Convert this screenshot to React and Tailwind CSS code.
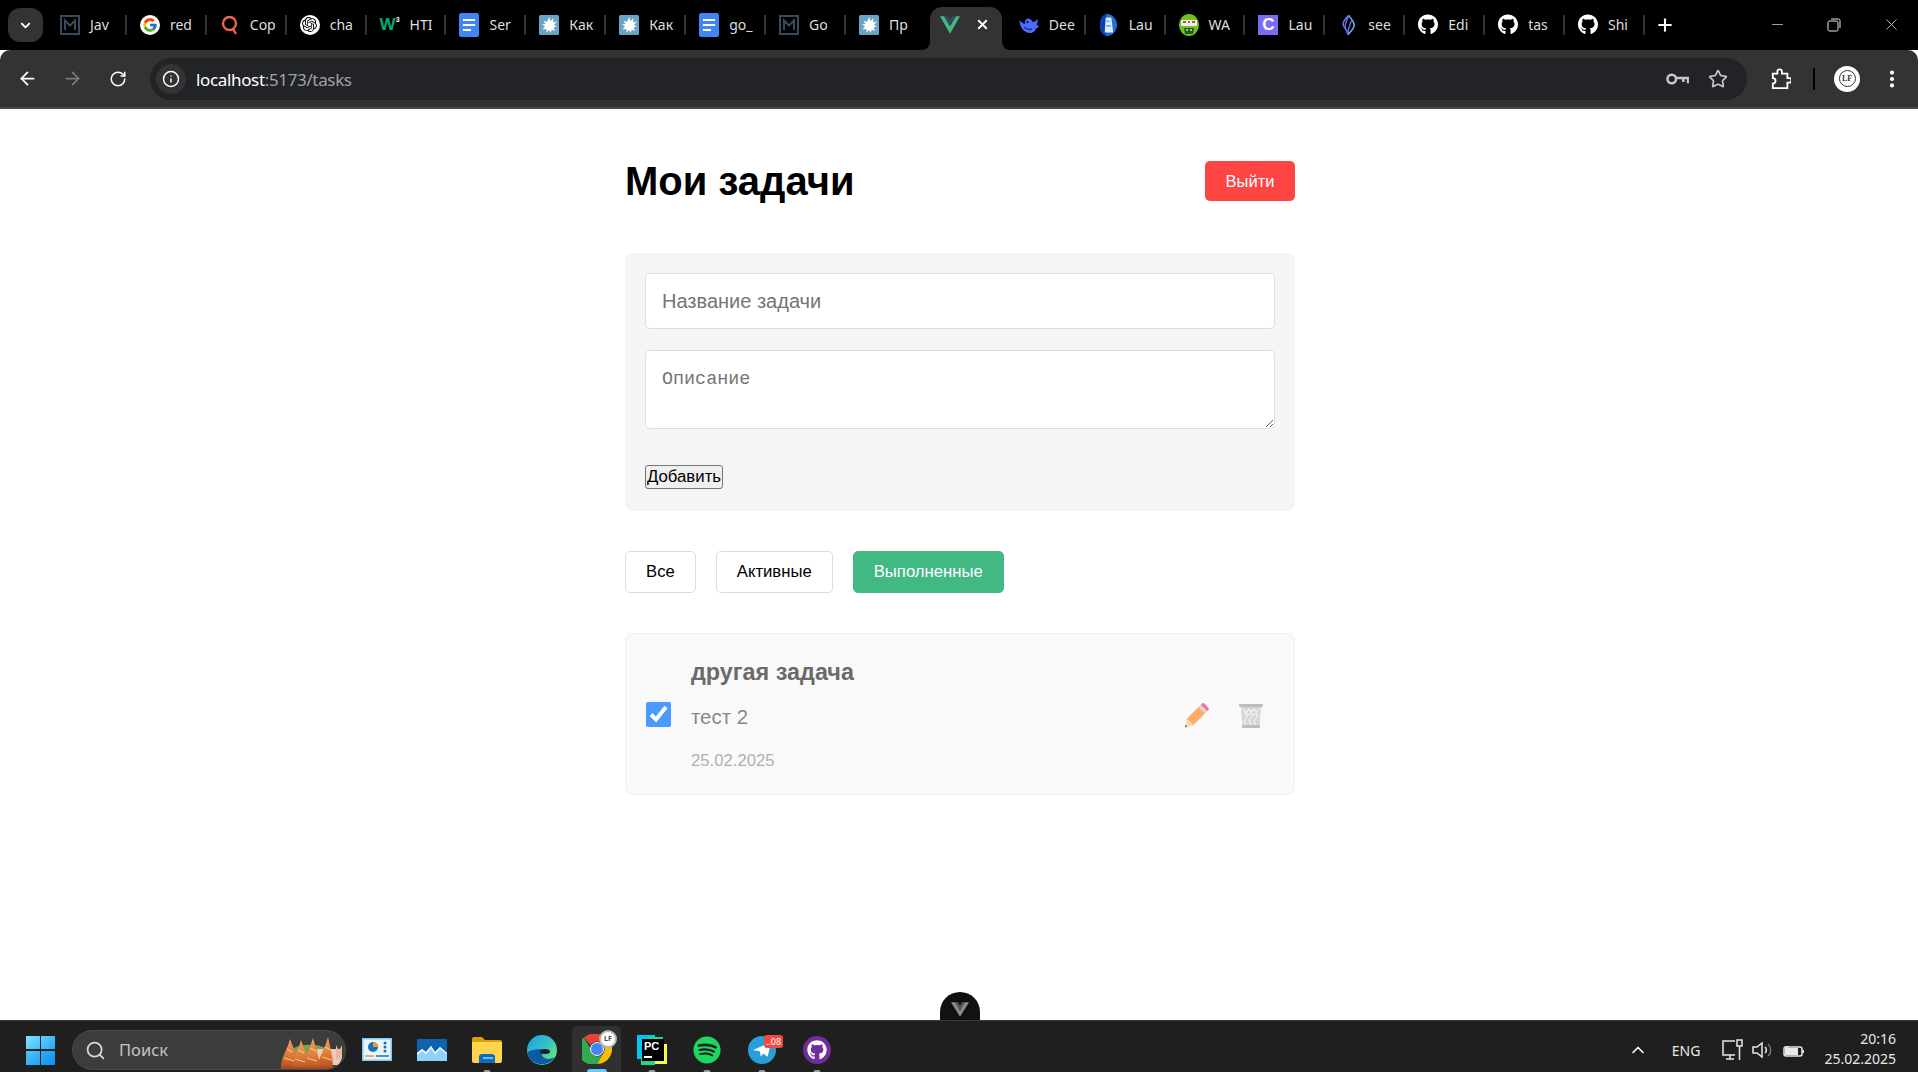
import React from "react";
import { FcGoogle } from "react-icons/fc";
import { FaGithub, FaSpotify } from "react-icons/fa";
import { SiOpenai } from "react-icons/si";
import { ArrowLeft, ArrowRight, RotateCw, Info, Star, ChevronDown, Plus, X, Minus, EllipsisVertical, Search, ChevronUp } from "lucide-react";

// --- tab favicons ---
const MailIcon = () => (
  <svg viewBox="0 0 20 20" className="w-5 h-5" fill="none" stroke="#3a4a5e" strokeWidth="2">
    <rect x="1" y="1" width="18" height="18" />
    <path d="M5 15V5.5l5 5 5-5V15" />
  </svg>
);

const GoogleIcon = () => (
  <div className="w-5 h-5 rounded-full bg-white flex items-center justify-center">
    <FcGoogle className="w-4 h-4" />
  </div>
);

const CopyleaksIcon = () => (
  <svg viewBox="0 0 20 20" className="w-5 h-5" fill="none" stroke="#ee6352" strokeWidth="2.4">
    <circle cx="9.5" cy="8.5" r="6.5" />
    <path d="M13 14l3 5" />
  </svg>
);

const ChatIcon = () => (
  <div className="w-5 h-5 rounded-full bg-white flex items-center justify-center">
    <SiOpenai className="w-[15px] h-[15px] text-black" />
  </div>
);

const W3Icon = () => (
  <div className="w-5 h-5 flex items-start justify-center text-[#04aa6d] font-black text-[17px] leading-[20px] font-['Liberation_Sans',sans-serif]">
    W<span className="text-white text-[7px] leading-[10px]">3</span>
  </div>
);

const DocsIcon = () => (
  <svg viewBox="0 0 20 24" className="w-5 h-6">
    <rect width="20" height="24" rx="2.5" fill="#4285f4" />
    <path d="M4 7h12M4 12h12M4 17h8" stroke="#fff" strokeWidth="2" />
  </svg>
);

const SplashIcon = () => (
  <svg viewBox="0 0 20 20" className="w-5 h-5">
    <rect width="20" height="20" rx="1.5" fill="#6aa3c4" />
    <path d="M10 2l1.5 4 3-3-.5 4.500 4-1-3 3.500 3 1.500-3.500 1 1.500 3.500-3.500-1.500-.5 3.500-2-3-2.500 2.500v-3.500l-4 .5 2.500-3-3-2 3.500-.5-2-3.500 3.500 1.500z" fill="#fff" />
  </svg>
);

const VueIcon = () => (
  <svg viewBox="0 0 24 21" className="w-5 h-[18px]">
    <path d="M0 0h5l7 12 7-12h5L12 21z" fill="#42b883" />
    <path d="M5 0h4.500L12 4.500 14.500 0H19l-7 12z" fill="#35495e" />
  </svg>
);

const WhaleIcon = () => (
  <svg viewBox="0 0 20 18" className="w-5 h-[18px]">
    <path d="M0.500 4C0.500 11 5 17 11 17c3.500 0 5.500-2.500 6.300-5 1.200.2 2.200-.5 2.700-2-1.200 0-2-1-2.200-2.300 1-1.200 1.400-3 .5-4.700-1 2-2.500 2.800-4.300 3.300C12 2.500 9 1.500 7 3.500c-1.500 1.500-1.500 3-1 4.500C4 7.500 2 6 0.500 4z" fill="#4d6bfe" />
    <circle cx="8.500" cy="6" r="1" fill="#000" />
    <path d="M5 11c2 2 5 3 8 2" fill="none" stroke="#000" strokeWidth="0.800" />
  </svg>
);

const LighthouseIcon = () => (
  <svg viewBox="0 0 18 24" className="w-[17px] h-6">
    <path d="M6 0a12 12 0 0 1 0 24z" fill="#1f6fd6" />
    <path d="M6 0a12 12 0 0 0-6 12 12 12 0 0 0 6 12z" fill="#0f3fa8" />
    <path d="M6 4h6l2 16H5z" fill="#dcecff" />
    <path d="M7 8h3M6.500 13h5" stroke="#1f6fd6" strokeWidth="1" />
  </svg>
);

const WaIcon = () => (
  <svg viewBox="0 0 20 22" className="w-5 h-[22px]">
    <ellipse cx="10" cy="11" rx="10" ry="11" fill="#6fc11f" />
    <rect x="2" y="6" width="16" height="6" rx="1" fill="#ececec" />
    <path d="M4 8h3M9 8h2M13 8h3" stroke="#a11f1f" strokeWidth="1.500" />
    <path d="M5 14h10l-1 6H6z" fill="#1d5c1a" />
    <circle cx="8" cy="16" r="1" fill="#cfe8c0" />
    <circle cx="12" cy="16" r="1" fill="#cfe8c0" />
  </svg>
);

const PurpleC = () => (
  <div className="w-5 h-5 bg-[#7c6cf5] text-white text-[17px] leading-5 font-bold text-center font-['Liberation_Sans',sans-serif]">C</div>
);

const SeedIcon = () => (
  <svg viewBox="0 0 16 24" className="w-[14px] h-6" fill="none" strokeWidth="1.600">
    <path d="M9 1C3 6 0 11 5 16c1 1.500 2 4 3 7" stroke="#4f86ff" />
    <path d="M9 1c1 3 6 6 6 11 0 5-5 8-7 11" stroke="#63c8ff" />
    <path d="M9 1C7 6 4 10 5 16M12 7c-1 4-4 6-4 16" stroke="#7c6cf5" />
  </svg>
);

const Github = () => <FaGithub className="w-[21px] h-[21px] text-white" />;

const tabs = [
  { label: "Jav", icon: MailIcon },
  { label: "red", icon: GoogleIcon },
  { label: "Cop", icon: CopyleaksIcon },
  { label: "cha", icon: ChatIcon },
  { label: "HTI", icon: W3Icon },
  { label: "Ser", icon: DocsIcon },
  { label: "Как", icon: SplashIcon },
  { label: "Как", icon: SplashIcon },
  { label: "go_", icon: DocsIcon },
  { label: "Go", icon: MailIcon },
  { label: "Пр", icon: SplashIcon },
  { active: true, icon: VueIcon },
  { label: "Dee", icon: WhaleIcon },
  { label: "Lau", icon: LighthouseIcon },
  { label: "WA", icon: WaIcon },
  { label: "Lau", icon: PurpleC },
  { label: "see", icon: SeedIcon },
  { label: "Edi", icon: Github },
  { label: "tas", icon: Github },
  { label: "Shi", icon: Github },
];

const Tab = ({ tab, noSep }) => {
  const Icon = tab.icon;
  if (tab.active) {
    return (
      <div className="relative w-[80px] h-[43px] shrink-0 flex items-center pb-2">
        <div className="absolute inset-y-0 left-[4px] right-[4px] bg-[#333333] rounded-t-xl" />
        <div className="absolute bottom-0 left-[-4px] w-2 h-2 bg-[#333333]">
          <div className="w-2 h-2 bg-black rounded-br-lg" />
        </div>
        <div className="absolute bottom-0 right-[-4px] w-2 h-2 bg-[#333333]">
          <div className="w-2 h-2 bg-black rounded-bl-lg" />
        </div>
        <div className="relative pl-[14px] flex items-center">
          <Icon />
          <X className="w-[15px] h-[15px] text-white ml-[15px]" strokeWidth={3} />
        </div>
      </div>
    );
  }
  return (
    <div className="relative w-[79.9px] h-[43px] shrink-0 flex items-center pl-[13px] pb-2">
      <div className="w-5 flex justify-center shrink-0">
        <Icon />
      </div>
      <span className="ml-[10px] whitespace-nowrap text-[14px] text-[#dedede] font-['Noto_Sans',sans-serif]">
        {tab.label}
      </span>
      {!noSep && <div className="absolute right-0 top-[8px] h-[20px] w-[2px] bg-[#333333]" />}
    </div>
  );
};

const TabStrip = () => (
  <div className="h-[50px] bg-black flex items-end shrink-0 relative">
    <div className="absolute left-2 top-2 w-[35px] h-[34px] rounded-xl bg-[#333333] flex items-center justify-center">
      <ChevronDown className="w-[15px] h-[15px] text-white" strokeWidth={3} />
    </div>
    <div className="flex ml-[47px]">
      {tabs.map((tab, i) => (
        <Tab key={i} tab={tab} noSep={tab.active || i === 10} />
      ))}
    </div>
    <Plus className="w-5 h-5 text-white ml-[10px] mb-[15px]" strokeWidth={2.5} />
    <div className="flex-1" />
    <div className="flex items-center mb-[16px] text-[#e8e8e8]">
      <Minus className="w-[17px] h-[17px] mr-[41px]" strokeWidth={1} />
      <svg viewBox="0 0 14 14" className="w-[14px] h-[14px] mr-[41px]" fill="none" stroke="#e8e8e8" strokeWidth="1">
        <rect x="1" y="3" width="10" height="10" rx="1.500" />
        <path d="M4 1h7.500A1.500 1.500 0 0 1 13 2.500V10" />
      </svg>
      <X className="w-[19px] h-[19px] mr-[17px]" strokeWidth={1} />
    </div>
  </div>
);

const Toolbar = () => (
  <div className="h-[59px] bg-[#333333] border-b-2 border-[#4a4a4a] rounded-t-[10px] shrink-0 flex items-center text-white">
    <ArrowLeft className="w-[21px] h-[21px] ml-[17px]" strokeWidth={2} />
    <ArrowRight className="w-[21px] h-[21px] ml-[24px] text-[#7a7a7a]" strokeWidth={2} />
    <RotateCw className="w-[18px] h-[18px] ml-[26px]" strokeWidth={2} />
    <div className="ml-[23px] w-[1597px] h-[42px] rounded-full bg-[#222326] flex items-center">
      <div className="ml-[6px] w-[30px] h-[30px] rounded-full bg-[#333333] flex items-center justify-center">
        <Info className="w-[18px] h-[18px]" strokeWidth={2} />
      </div>
      <span className="ml-[10px] mt-[2px] text-[17px] tracking-[-0.35px] text-white font-['Noto_Sans',sans-serif]">
        localhost<span className="text-[#a0a2a6]">:5173/tasks</span>
      </span>
      <div className="flex-1" />
      <svg viewBox="0 0 24 14" className="w-[23px] h-[14px]" fill="none" stroke="#c7c7c7" strokeWidth="2.6">
        <circle cx="6" cy="7" r="4.500" />
        <path d="M11 6h12v5.500M18 6v4" />
      </svg>
      <Star className="w-[20px] h-[20px] ml-[19px] mr-[19px] text-[#c7c7c7]" strokeWidth={2} />
    </div>
    <svg viewBox="0 0 22 24" className="w-5 h-[22px] ml-[24px]" fill="none" stroke="#fff" strokeWidth="2">
      <path d="M2 6h5V4a2.500 2.500 0 0 1 5 0v2h6v5h2a2.500 2.500 0 0 1 0 5h-2v6H2v-5a3 3 0 0 0 0-6z" />
    </svg>
    <div className="w-[2px] h-[22px] bg-black ml-[22px]" />
    <div className="ml-[19px] w-[26px] h-[26px] rounded-full bg-white flex items-center justify-center">
      <div className="w-[17px] h-[17px] rounded-full border border-[#333333] bg-white text-[#333333] text-[8px] font-bold leading-[15px] text-center font-['Liberation_Serif',serif]">
        LF
      </div>
    </div>
    <EllipsisVertical className="w-[22px] h-[22px] ml-[21px]" strokeWidth={2.6} />
  </div>
);

// --- page ---
const PencilEmoji = () => (
  <svg viewBox="0 0 25 26" className="w-[25px] h-[26px]">
    <path d="M2.800 16.800L14.800 4.800l6.400 6.400-12 12z" fill="#ffac6b" />
    <path d="M14.800 4.800l2-2 6.400 6.400-2 2z" fill="#d9d9d9" />
    <path d="M16.800 2.800l1-1a2 2 0 0 1 2.800 0l3.600 3.600a2 2 0 0 1 0 2.800l-1 1z" fill="#f4729a" />
    <path d="M2.800 16.800l6.400 6.400L1 25.500z" fill="#f5d9a8" />
    <path d="M1.600 22.800l1.700 1.700-2.300 1z" fill="#666" />
  </svg>
);

const TrashEmoji = () => (
  <svg viewBox="0 0 24 25" className="w-6 h-[25px]">
    <rect x="0" y="1" width="24" height="3" rx="1" fill="#bdbdbd" />
    <path d="M2 4h20l-1.500 19.500a1.500 1.500 0 0 1-1.500 1.500H5a1.500 1.500 0 0 1-1.500-1.500z" fill="#d6d6d6" />
    <path d="M4 6l5 6-4 6 3 5M10 6l-5 6M10 6l4 6-4 6 3 5M15 6l-5 6M15 6l4 6-4 6 2 5M20 6l-5 6" fill="none" stroke="#f2f2f2" strokeWidth="1.200" />
    <rect x="3" y="22" width="18" height="3" rx="1" fill="#bdbdbd" />
  </svg>
);

const filterClass = "h-[42px] px-5 rounded-[5px] text-[16.7px] border";

const Page = () => (
  <main className="flex-1 flex justify-center bg-white text-black font-['Liberation_Sans',sans-serif] overflow-hidden">
    <div className="w-[670px] ml-[2px] pt-[52px]">
      <div className="flex items-center justify-between mb-[52px] h-10">
        <h1 className="text-[40px] font-bold leading-10">Мои задачи</h1>
        <button className="w-[90px] h-10 rounded-[5px] bg-[#ff4444] text-white text-[16.5px]">Выйти</button>
      </div>

      <div className="bg-[#f5f5f5] rounded-lg p-5 pb-[22px] mb-10">
        <input
          type="text"
          placeholder="Название задачи"
          className="block w-full h-[56px] px-4 mb-[21px] bg-white border border-[#dddddd] rounded-[5px] text-[20px] placeholder:text-[#757575]"
        />
        <textarea
          placeholder="Описание"
          className="block w-full h-[79px] px-4 pt-[18px] pb-3 mb-[36px] bg-white border border-[#dddddd] rounded-[5px] text-[18.4px] leading-[22px] font-['Liberation_Mono',monospace] placeholder:text-[#757575]"
        />
        <button className="block w-[78px] h-6 bg-[#efefef] border border-[#767676] rounded-[3px] text-[16.8px] leading-none">Добавить</button>
      </div>

      <div className="flex gap-5 mb-10">
        <button className={`${filterClass} bg-white border-[#dddddd]`}>Все</button>
        <button className={`${filterClass} bg-white border-[#dddddd]`}>Активные</button>
        <button className={`${filterClass} bg-[#42b883] border-[#42b883] text-white`}>Выполненные</button>
      </div>

      <div className="flex items-center bg-[#f9f9f9] border border-[#eeeeee] rounded-lg pl-[20px] pr-[31px] pt-[25px] pb-[24px]">
        <input type="checkbox" defaultChecked className="w-[25px] h-[25px] accent-[#0075ff] opacity-70 shrink-0" />
        <div className="ml-[20px] flex-1">
          <div className="text-[23.4px] leading-[26px] font-bold text-[#6a6a6a] mb-[20px]">другая задача</div>
          <div className="text-[20.4px] leading-[24px] text-[#888888] mb-[23px]">тест 2</div>
          <div className="text-[16.7px] leading-[18px] text-[#b0b0b0]">25.02.2025</div>
        </div>
        <PencilEmoji />
        <div className="ml-[30px] mt-[1px]"><TrashEmoji /></div>
      </div>
    </div>
  </main>
);

// --- taskbar ---
const WinLogo = () => (
  <div className="grid grid-cols-2 gap-[1.5px] w-[29px] h-[29px]">
    <div className="bg-gradient-to-br from-[#7fe4ff] to-[#38bdf8]" />
    <div className="bg-gradient-to-br from-[#5dd0fb] to-[#22a7f5]" />
    <div className="bg-gradient-to-br from-[#4fc6fa] to-[#1ea0f3]" />
    <div className="bg-gradient-to-br from-[#2bb0f7] to-[#0f8df0]" />
  </div>
);

const BambooArt = () => (
  <svg viewBox="0 0 64 40" className="absolute right-0 top-0 w-16 h-10">
    <defs>
      <linearGradient id="shoot" x1="0" y1="0" x2="0" y2="1">
        <stop offset="0" stopColor="#f2a25f" />
        <stop offset="0.6" stopColor="#dd7a35" />
        <stop offset="1" stopColor="#b5501f" />
      </linearGradient>
    </defs>
    <path d="M8 20c8-8 30-8 38-2v6H8z" fill="#7f9f4f" />
    <path d="M36 18h24c2 6 1 12-3 16H36z" fill="#eccbb8" />
    <path d="M55 14l3 6 3-6v14h-6z" fill="#e8b8a0" />
    <path d="M0 36C0 26 6 20 9 8c3 8 7 16 9 28z" fill="url(#shoot)" />
    <path d="M36 36c2-10 8-18 11-30 2 10 5 20 5 30z" fill="url(#shoot)" />
    <path d="M10 38c2-12 7-18 10-29 3 9 8 17 10 29z" fill="url(#shoot)" />
    <path d="M22 38c2-12 6-18 10-31 3 11 6 19 8 31z" fill="url(#shoot)" />
    <path d="M6 18l5 3M3 27l10 3M17 19l6 3M14 28l10 3M29 17l6 3M26 27l10 3M44 16l6 3M41 26l10 3" stroke="#f7c08f" strokeWidth="1.200" />
    <path d="M0 36h52v4H0z" fill="#a84a1e" />
  </svg>
);

const ChartApp = () => (
  <svg viewBox="0 0 30 24" className="w-[30px] h-6">
    <rect width="30" height="23" fill="#7fcbf2" />
    <rect x="1.500" y="1.500" width="27" height="20" fill="#e9f5fc" />
    <circle cx="11" cy="9" r="5" fill="#1570c0" />
    <path d="M11 9V4a5 5 0 0 1 5 5z" fill="#f39c12" />
    <path d="M3 18h9" stroke="#f39c12" strokeWidth="1.500" />
    <path d="M14 18h13" stroke="#1570c0" strokeWidth="1.500" />
    <circle cx="23" cy="5" r="1.500" fill="#1570c0" />
    <circle cx="23" cy="9" r="1.500" fill="#1570c0" />
    <circle cx="23" cy="13" r="1.500" fill="#1570c0" />
  </svg>
);

const WaveApp = () => (
  <svg viewBox="0 0 30 22" className="w-[30px] h-[22px]">
    <rect width="30" height="22" fill="#0f62ad" />
    <path d="M0 14l5-4 4 3 5-6 4 6 5-5 7 6v8H0z" fill="#8fd3fa" />
    <path d="M0 14l5-4 4 3 5-6 4 6 5-5 7 6v1l-7-5-5 5-4-6-5 6-4-3-5 4z" fill="#fff" />
  </svg>
);

const FolderApp = () => (
  <svg viewBox="0 0 30 26" className="w-[30px] h-[26px]">
    <path d="M0 2a2 2 0 0 1 2-2h8l3 3h15a2 2 0 0 1 2 2v4H0z" fill="#d9a200" />
    <path d="M0 5h30v19a2 2 0 0 1-2 2H2a2 2 0 0 1-2-2z" fill="#ffd54f" />
    <path d="M5 20a3 3 0 0 1 3-3h10a3 3 0 0 1 3 3v6H5z" transform="translate(2 0)" fill="#0f6cbd" />
    <path d="M11 21h10" stroke="#8fd3fa" strokeWidth="1.500" />
  </svg>
);

const EdgeApp = () => (
  <svg viewBox="0 0 30 30" className="w-[30px] h-[30px]">
    <defs>
      <linearGradient id="edgeA" x1="0" y1="0" x2="1" y2="0.8">
        <stop offset="0" stopColor="#1e9fe0" />
        <stop offset="0.55" stopColor="#35c1c8" />
        <stop offset="1" stopColor="#66eb6e" />
      </linearGradient>
    </defs>
    <circle cx="15" cy="15" r="15" fill="url(#edgeA)" />
    <path d="M0.500 17C2 30 20 34 28 22c-3 2-9 3-12 0-2-2-1-5 3-6-6-4-16 0-18.500 1z" fill="#0c59a4" />
    <ellipse cx="18" cy="16.500" rx="5" ry="2.500" fill="#1f1f1f" />
  </svg>
);

const ChromeApp = () => (
  <svg viewBox="0 0 30 30" className="w-[30px] h-[30px]">
    <path d="M15 0a15 15 0 0 1 13 7.500H15a7.500 7.500 0 0 0-6.500 3.750L2 3.500A15 15 0 0 1 15 0z" fill="#ea4335" />
    <path d="M28 7.500A15 15 0 0 1 15 30l6.500-11.250A7.500 7.500 0 0 0 21.500 11z" fill="#fbbc04" />
    <path d="M15 30A15 15 0 0 1 2 3.500l6.500 11.250A7.500 7.500 0 0 0 15 22.500 7.500 7.500 0 0 0 21.500 18.750z" fill="#34a853" />
    <circle cx="15" cy="15" r="6.500" fill="#4285f4" stroke="#fff" strokeWidth="1" />
  </svg>
);

const PyCharmApp = () => (
  <div className="relative w-[30px] h-[30px]">
    <div className="absolute left-0 top-0 w-[18px] h-[24px] bg-[#07c3f2]" />
    <div className="absolute left-[10px] top-[2px] w-[16px] h-[10px] bg-[#21d789]" />
    <div className="absolute right-0 bottom-[1px] w-[14px] h-[20px] bg-[#fcf84a]" />
    <div className="absolute left-[4px] bottom-0 w-[14px] h-[8px] bg-[#21d789]" />
    <div className="absolute left-[5px] top-[4px] w-[22px] h-[22px] bg-black text-white text-[11px] font-bold leading-[11px] pl-[2px] pt-[2px] font-['Liberation_Sans',sans-serif]">
      PC
      <div className="w-2 h-[2px] bg-white mt-[4px]" />
    </div>
  </div>
);

const TelegramApp = () => (
  <div className="relative w-7 h-7 rounded-full bg-[#2a9ed8] flex items-center justify-center">
    <svg viewBox="0 0 16 14" className="w-[18px] h-4">
      <path d="M0 7L16 0l-3 13-4-3-2 3-1-5z" fill="#fff" />
    </svg>
    <div className="absolute -top-[1px] left-[16px] w-[19px] h-[13px] rounded-[3px] bg-[#f04a43] text-white text-[9px] leading-[13px] text-center font-['Noto_Sans',sans-serif]">
      ..08
    </div>
  </div>
);

const GithubApp = () => (
  <div className="w-7 h-7 rounded-full bg-[#6f2e9a] flex items-center justify-center">
    <FaGithub className="w-5 h-5 text-white" />
  </div>
);

const Dot = () => <div className="absolute bottom-0 left-1/2 -translate-x-1/2 w-[7px] h-[2px] rounded-t bg-[#9a9a9a]" />;

const Taskbar = () => (
  <div className="relative h-[52px] pt-[7px] bg-[#1f1f1f] border-t border-[#3a3a3a] shrink-0 flex items-center font-['Noto_Sans',sans-serif] text-[#e8e8e8]">
    <div className="ml-[26px]"><WinLogo /></div>
    <div className="relative ml-[17px] w-[274px] h-[40px] rounded-full bg-[#3c3c3c] border border-[#4a4a4a] flex items-center overflow-hidden">
      <Search className="ml-[12px] w-[21px] h-[21px] text-[#d8d8d8]" strokeWidth={2} />
      <span className="ml-[13px] text-[16.500px] text-[#c4c4c4]">Поиск</span>
      <BambooArt />
    </div>
    <div className="ml-[16px] w-[30px] flex justify-center"><ChartApp /></div>
    <div className="ml-[25px] w-[30px] flex justify-center"><WaveApp /></div>
    <div className="relative ml-[25px] h-[44px] flex items-center"><FolderApp /><Dot /></div>
    <div className="ml-[25px]"><EdgeApp /></div>
    <div className="relative ml-[15px] w-[49px] h-[46px] self-end rounded-t-[5px] bg-[#303030] flex items-center justify-center">
      <ChromeApp />
      <div className="absolute top-[4px] right-[4px] w-[18px] h-[18px] rounded-full bg-white border-2 border-[#b5b5b5] text-[#444] text-[7px] leading-[14px] text-center font-bold">LF</div>
      <div className="absolute bottom-0 left-[15px] w-5 h-[3px] rounded-t bg-[#60cdff]" />
    </div>
    <div className="relative ml-[16px] h-[44px] flex items-center"><PyCharmApp /><Dot /></div>
    <div className="relative ml-[26px] h-[44px] flex items-center">
      <FaSpotify className="w-7 h-7 text-[#1ed760]" />
      <Dot />
    </div>
    <div className="relative ml-[27px] h-[44px] flex items-center"><TelegramApp /><Dot /></div>
    <div className="relative ml-[27px] h-[44px] flex items-center"><GithubApp /><Dot /></div>

    <div className="flex-1" />

    <ChevronUp className="w-[20px] h-[20px] text-white" strokeWidth={2} />
    <span className="ml-[24px] text-[14px]">ENG</span>
    <svg viewBox="0 0 22 22" className="ml-[21px] w-[22px] h-[22px]" fill="none" stroke="#e8e8e8" strokeWidth="1.500">
      <path d="M14 2H2v14h12M5 20h8M9 16v4" />
      <rect x="16" y="1" width="5" height="6" />
      <path d="M18.500 7v14" />
    </svg>
    <svg viewBox="0 0 22 20" className="ml-[9px] w-[22px] h-5" fill="none" stroke="#e8e8e8" strokeWidth="1.500">
      <path d="M1 7v6h4l5 4V3L5 7z" />
      <path d="M13 7a4 4 0 0 1 0 6" />
      <path d="M16 4a8 8 0 0 1 0 12" stroke="#777" />
    </svg>
    <svg viewBox="0 0 22 18" className="ml-[8px] w-[22px] h-[18px]" fill="#e8e8e8">
      <path d="M3 6h15a2 2 0 0 1 2 2v5a2 2 0 0 1-2 2H4a2 2 0 0 1-2-2V8a2 2 0 0 1 1-2z" fill="none" stroke="#e8e8e8" strokeWidth="1.500" />
      <path d="M3 7h13v7H3z" />
      <path d="M4 0v5h3L4 9z" />
      <rect x="20" y="9" width="2" height="3" />
    </svg>
    <div className="ml-[20px] mr-[22px] -mt-[2px] text-right text-[14px] leading-[20px]">
      <div>20:16</div>
      <div>25.02.2025</div>
    </div>
  </div>
);

const DevtoolsBadge = () => (
  <div className="absolute left-[940px] top-[992px] w-10 h-7 rounded-t-full bg-[#111111] flex items-start justify-center pt-[10px]">
    <svg viewBox="0 0 20 16" className="w-[18px] h-[15px]">
      <path d="M0 0h5l5 9 5-9h5L10 16z" fill="#8a8a8a" />
      <path d="M5 0h3l2 3.500L12 0h3l-5 9z" fill="#555" />
    </svg>
  </div>
);

export default function App() {
  return (
    <div className="relative h-screen w-full flex flex-col overflow-hidden bg-white">
      <TabStrip />
      <Toolbar />
      <Page />
      <DevtoolsBadge />
      <Taskbar />
    </div>
  );
}
